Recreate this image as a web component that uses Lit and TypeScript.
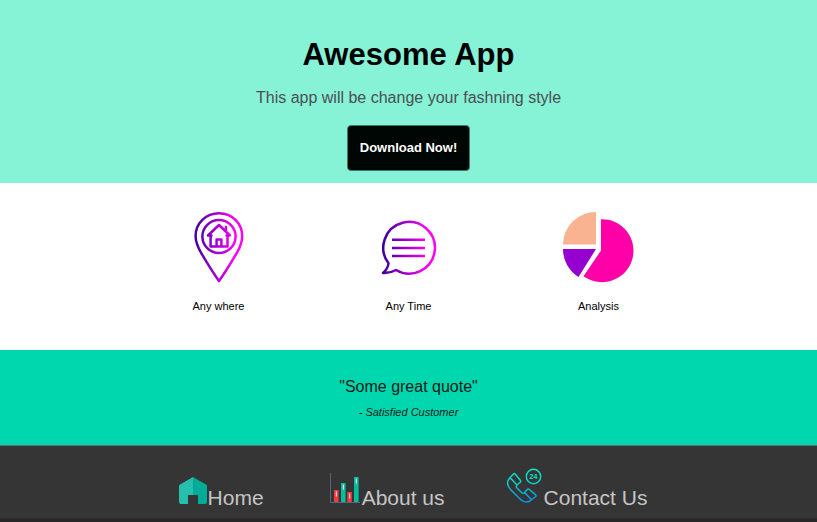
import { LitElement, html, css, svg } from "lit";
import { customElement } from "lit/decorators.js";

const pinIcon = html`<svg class="art" viewBox="1 0 80 80" aria-hidden="true">
  <defs>
    <linearGradient id="pin" gradientUnits="userSpaceOnUse" x1="17" y1="0" x2="65" y2="0">
      <stop offset="0" stop-color="#4300a8" /><stop offset=".85" stop-color="#ff00f4" />
    </linearGradient>
  </defs>
  <g fill="none" stroke="url(#pin)" stroke-width="2.5" stroke-linejoin="round" stroke-linecap="round">
    <path d="M41 6.200C27.800 6.200 17.600 16.400 17.600 29c0 6 2.400 11.400 5.400 16.600C28.500 55 34.500 65 41 74c6.500-9 12.500-19 18-28.400 3-5.200 5.200-10.600 5.200-16.600C64.200 16.400 54 6.200 41 6.200z" />
    <circle cx="41" cy="29.500" r="16.600" />
    <path d="M30 28.500L41 18l11 10.500h-3.500M30 28.500h3.500M48 20v4M32.600 29v10.400h16.900V29M38.600 39v-6.600h4.800V39" />
  </g>
</svg>`;

const chatIcon = html`<svg class="art" viewBox="1 0 80 80" aria-hidden="true">
  <defs>
    <linearGradient id="chat" gradientUnits="userSpaceOnUse" x1="13" y1="0" x2="67" y2="0">
      <stop offset="0" stop-color="#33009e" /><stop offset=".85" stop-color="#ff00f4" />
    </linearGradient>
  </defs>
  <g fill="none" stroke="url(#chat)" stroke-width="2.500" stroke-linejoin="round" stroke-linecap="round">
    <path d="M15 66c3.500-3 5-6 5.500-9.700A25.800 25.800 0 1 1 28 63c-3.500 2-7.500 3.300-13 3z" />
    <path stroke-linecap="butt" d="M24 32.800l33 .02M24 41l33 .02M24 49l33 .02" />
  </g>
</svg>`;

const pieIcon = html`<svg class="art" viewBox="1 0 80 80" aria-hidden="true">
  <path fill="#f9b390" d="M38 5v32.500H5A33 32.500 0 0 1 38 5z" />
  <path fill="#9500d0" d="M5 42h33L20.500 70A33 33 0 0 1 5 42z" />
  <path fill="#ff00a8" d="M43 12.200A31.500 31.500 0 1 1 25.500 69.200L43 43.500z" />
</svg>`;

const homeIcon = html`<svg class="home" viewBox="0 0 28 28" aria-hidden="true">
  <path fill="#26bfae" d="M14 0v18H9v9H2q-2 0-2-2V9q0-1 1-1.500z" />
  <path fill="#00ac97" d="M14 0l13 7.500q1 .5 1 1.500v16q0 2-2 2h-7v-9h-5z" />
</svg>`;

const bar = (x: number, y: number, color: string) => svg`
  <rect x=${x} y=${y} width="4.6" height=${29 - y} fill=${color} />
  <rect x=${x + 1.8} y=${y + 1.5} width="1.2" height="5" fill="#e4d9d6" />`;

const barsIcon = html`<svg class="bars" viewBox="0 0 30 30" aria-hidden="true">
  ${bar(4, 17, "#f8383c")}${bar(11, 10, "#00bf9c")}${bar(17.2, 19, "#f8383c")}${bar(24, 4, "#00bf9c")}
  <path d="M.5 0v29.500H30" fill="none" stroke="#4d6b80" />
</svg>`;

const phoneIcon = html`<svg class="phone" viewBox="0 0 36 36" aria-hidden="true">
  <defs>
    <linearGradient id="call" gradientUnits="userSpaceOnUse" x1="0" y1="0" x2="0" y2="36">
      <stop offset="0" stop-color="#00f0c8" /><stop offset=".4" stop-color="#00d9d2" /><stop offset="1" stop-color="#0090f0" />
    </linearGradient>
  </defs>
  <g fill="none" stroke="url(#call)" stroke-width="1.400" stroke-linejoin="round">
    <circle cx="27.500" cy="8.500" r="7.200" />
    <path d="M4 9.500l3.500-3.500q.8-.8 1.600 0l5.400 6.500q.7.800 0 1.500L11 17M4 9.500l7 7.500q-1.500 1.500 0 3l4.500 4.500q1.500 1.500 3 0l7 7.200M4 9.500q-4 4.500-1.500 9 1.500 2.500 3.500 4.500l7 7q2 2.200 4.500 3.300 4.500 2 8-1.600M18.500 24.500l3-3.200q.8-.8 1.600 0l6.600 5.600q.8.800 0 1.600L25.500 31.700" />
  </g>
  <text x="27.500" y="11" text-anchor="middle" class="badge">24</text>
</svg>`;

@customElement("app-root")
export class AppRoot extends LitElement {
  static styles = css`
    :host {
      display: block;
      font-family: "Liberation Sans", Arial, sans-serif;
      color: #000;
      text-align: center;
      background: #2b2729;
      min-height: 100vh;
    }
    h1, p, blockquote { margin: 0; }
    .hero {
      display: flex;
      flex-direction: column;
      align-items: center;
      background: #86f2d6;
      padding: 37px 16px 12px;
    }
    h1 { font-size: 31px; line-height: 36px; }
    .tagline { margin: 16px 0 18px; font-size: 16px; line-height: 18px; color: #4c4f54; }
    button {
      font: bold 13px/16px "Liberation Sans", Arial, sans-serif;
      color: #fff;
      background: #000603;
      border: 1px solid #43796b;
      border-radius: 4px;
      padding: 14px 12px;
      height: 46px;
      cursor: pointer;
    }
    .features {
      display: flex;
      justify-content: center;
      background: #fff;
      padding: 24px 0 36px;
    }
    .feature { width: 190px; }
    .art { display: block; width: 80px; height: 80px; margin: 0 auto 12px; }
    .art, .home, .bars, .phone { flex: none; }
    .caption { font-size: 11px; line-height: 15px; }
    .quote { background: #00d7af; padding: 28px 16px 26px; }
    .words { font-size: 16px; line-height: 18px; color: #0b1a17; }
    .author { margin-top: 9px; font-size: 11px; line-height: 14px; font-style: italic; color: #0b1a17; }
    footer {
      background: #353535;
      border-top: 1px solid #57746c;
      border-bottom: 1px solid #2f2d2e;
      padding: 22px 0 8px;
    }
    nav { display: flex; justify-content: center; align-items: flex-end; gap: 61px; padding-left: 9px; }
    a {
      display: flex;
      align-items: flex-end;
      font-size: 21px;
      line-height: 24px;
      color: #c5c5c5;
      text-decoration: none;
    }
    .home { width: 28px; height: 28px; margin: 0 1px 5px 0; }
    .bars { width: 30px; height: 30px; margin: 0 2px 7px 5px; }
    .phone { width: 36px; height: 36px; margin: 0 2px 6px 0; }
    .badge { font: bold 7px "Liberation Sans", Arial, sans-serif; fill: #00e8cd; }
  `;

  render() {
    const features = [
      { art: pinIcon, name: "Any where" },
      { art: chatIcon, name: "Any Time" },
      { art: pieIcon, name: "Analysis" },
    ];
    const links = [
      { icon: homeIcon, name: "Home" },
      { icon: barsIcon, name: "About us" },
      { icon: phoneIcon, name: "Contact Us" },
    ];
    return html`
      <header class="hero">
        <h1>Awesome App</h1>
        <p class="tagline">This app will be change your fashning style</p>
        <button type="button">Download Now!</button>
      </header>
      <main>
        <section class="features">
          ${features.map((f) => html`<div class="feature">${f.art}<p class="caption">${f.name}</p></div>`)}
        </section>
        <section class="quote">
          <blockquote class="words">"Some great quote"</blockquote>
          <p class="author">- Satisfied Customer</p>
        </section>
      </main>
      <footer>
        <nav>${links.map((l) => html`<a href="#">${l.icon}<span>${l.name}</span></a>`)}</nav>
      </footer>
    `;
  }
}
